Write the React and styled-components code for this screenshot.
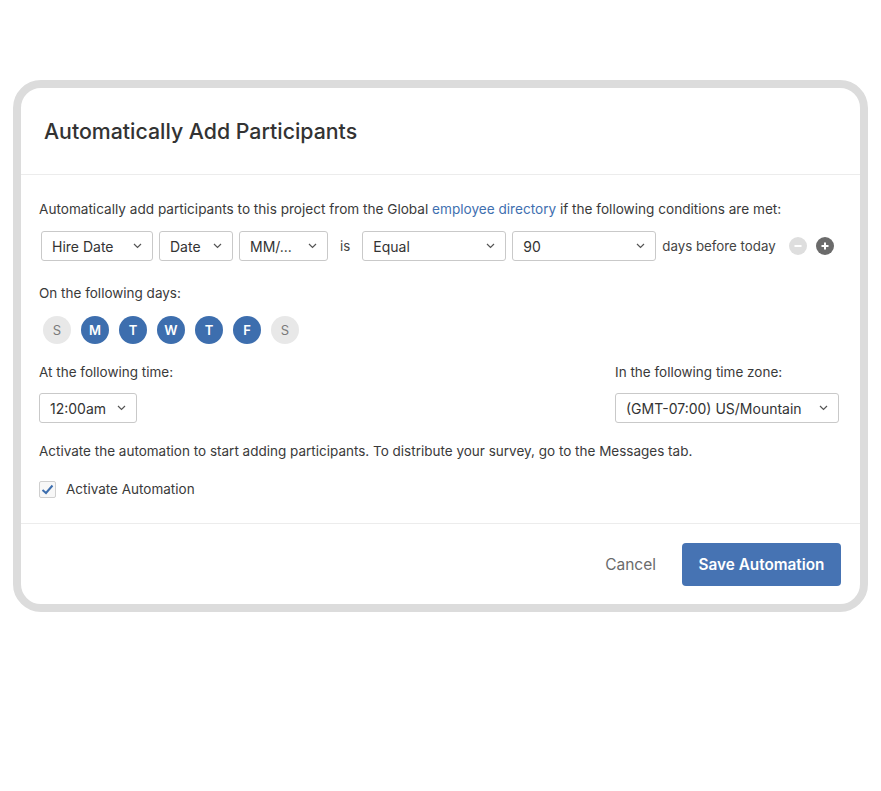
import React from "react"
import styled, { createGlobalStyle } from "styled-components"

const Global = createGlobalStyle`
  body {
    margin: 0;
    background: #fff;
    font-family: Inter, "Open Sans", sans-serif;
    color: #3a3a3a;
  }
`

const Page = styled.div`
  padding: 80px 0 0 13px;
  width: 881px;
  height: 791px;
  box-sizing: border-box;
`

const Frame = styled.div`
  width: 855px;
  height: 532px;
  box-sizing: border-box;
  border: 8px solid #dcdcdc;
  border-radius: 28px;
  background: #fff;
  display: flex;
  flex-direction: column;
  overflow: hidden;
`

const Header = styled.div`
  height: 86px;
  border-bottom: 1px solid #ececec;
  display: flex;
  align-items: center;
  padding-left: 23px;
`

const Title = styled.h1`
  margin: 0;
  font-size: 21.3px;
  font-weight: 500;
  color: #333;
`

const Body = styled.div`
  flex: 1;
  padding: 25px 18px 0 18px;
  display: flex;
  flex-direction: column;
`

const Text = styled.div`
  font-size: ${(p) => p.fs || 13.5}px;
  line-height: 18px;
  color: #3a3a3a;
  margin-top: ${(p) => p.mt || 0}px;
`

const Link = styled.span`
  color: #3f70b0;
`

const ConditionRow = styled.div`
  display: flex;
  align-items: center;
  gap: 6px;
  margin-top: 13px;
  padding-left: 2px;
`

const SelectBox = styled.div`
  width: ${(p) => p.w}px;
  height: 30px;
  box-sizing: border-box;
  border: 1px solid #c9c9c9;
  border-radius: 3px;
  display: flex;
  align-items: center;
  justify-content: space-between;
  padding: 0 10px 0 10px;
  font-size: 14px;
  color: #333;
  background: #fff;
`

const Word = styled.span`
  font-size: 13.3px;
  color: #444;
  margin: 0 ${(p) => p.mx || 0}px;
`

const CircleBtn = styled.span`
  width: 18px;
  height: 18px;
  border-radius: 50%;
  background: ${(p) => (p.dark ? "#6b6b6b" : "#dedede")};
  display: inline-flex;
  align-items: center;
  justify-content: center;
  margin-left: ${(p) => p.ml || 0}px;
`

const Days = styled.div`
  display: flex;
  gap: 10px;
  margin-top: 14px;
  padding-left: 4px;
`

const Day = styled.span`
  width: 28px;
  height: 28px;
  border-radius: 50%;
  display: inline-flex;
  align-items: center;
  justify-content: center;
  font-size: 13px;
  font-weight: ${(p) => (p.on ? 600 : 400)};
  background: ${(p) => (p.on ? "#3d6eae" : "#e8e8e8")};
  color: ${(p) => (p.on ? "#fff" : "#7a7a7a")};
`

const TimeRow = styled.div`
  display: flex;
  justify-content: space-between;
  margin-top: 19px;
  padding-right: 3px;
`

const Col = styled.div`
  display: flex;
  flex-direction: column;
  gap: 12px;
`

const CheckRow = styled.div`
  display: flex;
  align-items: center;
  gap: 10px;
  margin-top: 20px;
`

const Box = styled.span`
  width: 17px;
  height: 17px;
  box-sizing: border-box;
  border: 1px solid #cfcfcf;
  border-radius: 2px;
  display: inline-flex;
  align-items: center;
  justify-content: center;
  background: #f7f7f7;
`

const Footer = styled.div`
  height: 80px;
  border-top: 1px solid #ececec;
  display: flex;
  align-items: center;
  justify-content: flex-end;
  gap: 26px;
  padding-right: 19px;
`

const Cancel = styled.button`
  border: none;
  background: none;
  font-family: inherit;
  font-size: 15.5px;
  color: #6b6b6b;
  padding: 0;
`

const Primary = styled.button`
  width: 159px;
  height: 43px;
  border: none;
  border-radius: 4px;
  background: #4673b3;
  color: #fff;
  font-family: inherit;
  font-size: 15.3px;
  font-weight: 600;
`

const Chevron = () => (
  <svg width="9" height="6" viewBox="0 0 9 6">
    <polyline points="1,1 4.5,4.5 8,1" fill="none" stroke="#555" strokeWidth="1.2" />
  </svg>
)

const Select = ({ w, children }) => (
  <SelectBox w={w}>
    <span>{children}</span>
    <Chevron />
  </SelectBox>
)

const days = [
  ["S", false],
  ["M", true],
  ["T", true],
  ["W", true],
  ["T", true],
  ["F", true],
  ["S", false],
]

export default function App() {
  return (
    <Page>
      <Global />
      <Frame>
        <Header>
          <Title>Automatically Add Participants</Title>
        </Header>
        <Body>
          <Text fs={13.6}>
            Automatically add participants to this project from the Global{" "}
            <Link>employee directory</Link> if the following conditions are met:
          </Text>
          <ConditionRow>
            <Select w={112}>Hire Date</Select>
            <Select w={74}>Date</Select>
            <Select w={89}>MM/...</Select>
            <Word mx={6}>is</Word>
            <Select w={144}>Equal</Select>
            <Select w={144}>90</Select>
            <Word>days before today</Word>
            <CircleBtn ml={7}>
              <svg width="10" height="10" viewBox="0 0 10 10">
                <line x1="1.5" y1="5" x2="8.5" y2="5" stroke="#fff" strokeWidth="2" />
              </svg>
            </CircleBtn>
            <CircleBtn dark ml={3}>
              <svg width="10" height="10" viewBox="0 0 10 10">
                <line x1="1.5" y1="5" x2="8.5" y2="5" stroke="#fff" strokeWidth="2" />
                <line x1="5" y1="1.5" x2="5" y2="8.5" stroke="#fff" strokeWidth="2" />
              </svg>
            </CircleBtn>
          </ConditionRow>
          <Text mt={23}>On the following days:</Text>
          <Days>
            {days.map(([d, on], i) => (
              <Day key={i} on={on ? 1 : 0}>
                {d}
              </Day>
            ))}
          </Days>
          <TimeRow>
            <Col>
              <Text>At the following time:</Text>
              <Select w={98}>12:00am</Select>
            </Col>
            <Col>
              <Text>In the following time zone:</Text>
              <Select w={224}>(GMT-07:00) US/Mountain</Select>
            </Col>
          </TimeRow>
          <Text mt={19}>
            Activate the automation to start adding participants. To distribute your survey, go to
            the Messages tab.
          </Text>
          <CheckRow>
            <Box>
              <svg width="13" height="11" viewBox="0 0 13 11">
                <polyline points="1.5,6 5,9 11.5,1.5" fill="none" stroke="#3d6eae" strokeWidth="2" />
              </svg>
            </Box>
            <Text>Activate Automation</Text>
          </CheckRow>
        </Body>
        <Footer>
          <Cancel>Cancel</Cancel>
          <Primary>Save Automation</Primary>
        </Footer>
      </Frame>
    </Page>
  )
}
